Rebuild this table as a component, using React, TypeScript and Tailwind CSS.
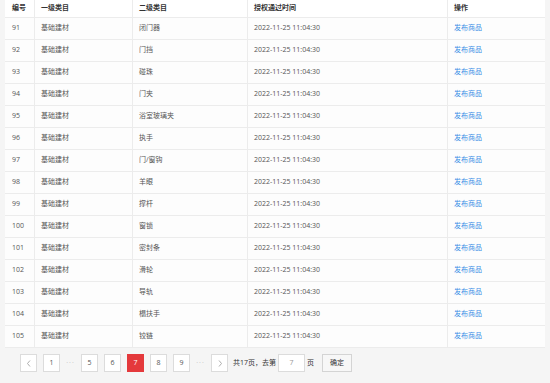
import React from "react";

const rows: [string, string][] = [
  ["91", "闭门器"],
  ["92", "门挡"],
  ["93", "碰珠"],
  ["94", "门夹"],
  ["95", "浴室玻璃夹"],
  ["96", "执手"],
  ["97", "门/窗钩"],
  ["98", "羊眼"],
  ["99", "撑杆"],
  ["100", "窗锁"],
  ["101", "密封条"],
  ["102", "滑轮"],
  ["103", "导轨"],
  ["104", "榻扶手"],
  ["105", "铰链"],
];

const font = { fontFamily: '"Open Sans","Noto Sans CJK SC",sans-serif' };

function PBtn({ children, active }: { children: React.ReactNode; active?: boolean }) {
  return (
    <div
      className={
        "h-[18px] w-[17px] flex items-center justify-center border text-[7px] " +
        (active ? "bg-[#e4393c] border-[#e4393c] text-white" : "bg-white border-[#dcdcdc] text-[#555]")
      }
    >
      {children}
    </div>
  );
}

export default function App() {
  return (
    <div className="w-[550px] h-[383px] bg-[#f5f5f5] overflow-hidden" style={font}>
      <div className="ml-[5px] w-[540px] bg-white">
        <div className="flex h-[18px] border-b border-[#ececec] text-[7px] text-[#333] font-semibold items-center">
          <div className="w-[30px] pl-[7px] h-full flex items-center border-r border-[#ececec]">编号</div>
          <div className="w-[98px] pl-[6px] h-full flex items-center border-r border-[#ececec]">一级类目</div>
          <div className="w-[115px] pl-[6px] h-full flex items-center border-r border-[#ececec]">二级类目</div>
          <div className="w-[200px] pl-[6px] h-full flex items-center border-r border-[#ececec]">授权通过时间</div>
          <div className="flex-1 pl-[6px] h-full flex items-center">操作</div>
        </div>
        {rows.map(([id, name]) => (
          <div key={id} className="flex h-[22px] border-b border-[#ececec] text-[7px] text-[#555] items-center bg-[#fdfdfd]">
            <div className="w-[30px] pl-[7px] h-full flex items-center border-r border-[#ececec]">{id}</div>
            <div className="w-[98px] pl-[6px] h-full flex items-center border-r border-[#ececec]">基础建材</div>
            <div className="w-[115px] pl-[6px] h-full flex items-center border-r border-[#ececec]">{name}</div>
            <div className="w-[200px] pl-[6px] h-full flex items-center border-r border-[#ececec]">2022-11-25 11:04:30</div>
            <div className="flex-1 pl-[6px] h-full flex items-center text-[#3a8ee6]">发布商品</div>
          </div>
        ))}
      </div>
      <div className="flex items-center ml-[20px] mt-[6px] text-[7px] text-[#555]">
        <PBtn>
          <svg width="6" height="7" viewBox="0 0 6 7"><path d="M4 0.5 L1.5 3.5 L4 6.5" fill="none" stroke="#999" strokeWidth="0.8" /></svg>
        </PBtn>
        <div className="w-[6px]" />
        <PBtn>1</PBtn>
        <div className="w-[21px] text-center text-[#bbb] tracking-[1px]">···</div>
        <PBtn>5</PBtn>
        <div className="w-[6px]" />
        <PBtn>6</PBtn>
        <div className="w-[6px]" />
        <PBtn active>7</PBtn>
        <div className="w-[6px]" />
        <PBtn>8</PBtn>
        <div className="w-[6px]" />
        <PBtn>9</PBtn>
        <div className="w-[21px] text-center text-[#bbb] tracking-[1px]">···</div>
        <PBtn>
          <svg width="6" height="7" viewBox="0 0 6 7"><path d="M2 0.5 L4.5 3.5 L2 6.5" fill="none" stroke="#999" strokeWidth="0.8" /></svg>
        </PBtn>
        <div className="ml-[5px] text-[#333]">共17页，去第</div>
        <div className="ml-[2px] h-[18px] w-[27px] bg-white border border-[#dcdcdc] flex items-center justify-center text-[#999]">7</div>
        <div className="ml-[2px] text-[#333]">页</div>
        <div className="ml-[8px] h-[18px] w-[30px] border border-[#d4d4d4] bg-[#f7f7f7] flex items-center justify-center text-[#333]">确定</div>
      </div>
    </div>
  );
}
